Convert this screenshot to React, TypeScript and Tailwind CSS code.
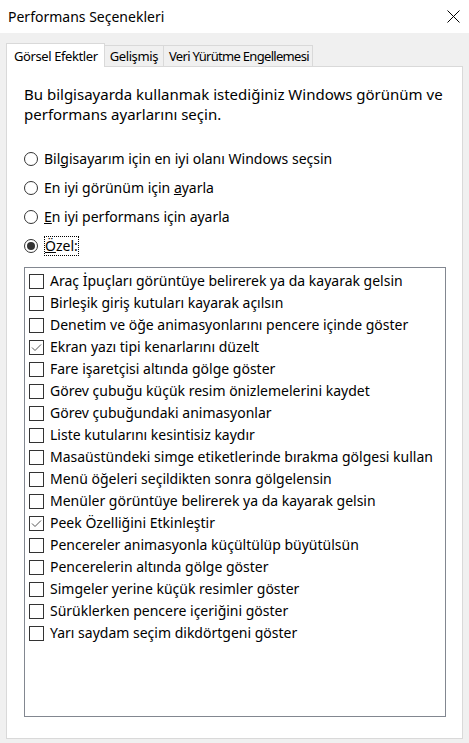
import React, { useState } from 'react';

const options = [
  { label: 'Araç İpuçları görüntüye belirerek ya da kayarak gelsin', checked: false },
  { label: 'Birleşik giriş kutuları kayarak açılsın', checked: false },
  { label: 'Denetim ve öğe animasyonlarını pencere içinde göster', checked: false },
  { label: 'Ekran yazı tipi kenarlarını düzelt', checked: true },
  { label: 'Fare işaretçisi altında gölge göster', checked: false },
  { label: 'Görev çubuğu küçük resim önizlemelerini kaydet', checked: false },
  { label: 'Görev çubuğundaki animasyonlar', checked: false },
  { label: 'Liste kutularını kesintisiz kaydır', checked: false },
  { label: 'Masaüstündeki simge etiketlerinde bırakma gölgesi kullan', checked: false },
  { label: 'Menü öğeleri seçildikten sonra gölgelensin', checked: false },
  { label: 'Menüler görüntüye belirerek ya da kayarak gelsin', checked: false },
  { label: 'Peek Özelliğini Etkinleştir', checked: true },
  { label: 'Pencereler animasyonla küçültülüp büyütülsün', checked: false },
  { label: 'Pencerelerin altında gölge göster', checked: false },
  { label: 'Simgeler yerine küçük resimler göster', checked: false },
  { label: 'Sürüklerken pencere içeriğini göster', checked: false },
  { label: 'Yarı saydam seçim dikdörtgeni göster', checked: false },
];

function Radio({ selected }: { selected?: boolean }) {
  return (
    <span className="w-[14px] h-[14px] rounded-full border border-[#333] bg-white flex items-center justify-center shrink-0">
      {selected && <span className="w-[8px] h-[8px] rounded-full bg-[#333]" />}
    </span>
  );
}

function Check({ checked }: { checked: boolean }) {
  return (
    <span className="w-[15px] h-[15px] border border-[#333] bg-white flex items-center justify-center shrink-0">
      {checked && (
        <svg width="13" height="13" viewBox="0 0 13 13">
          <polyline points="2,6.5 5,9.5 11,3.5" fill="none" stroke="#555" strokeWidth="1" />
        </svg>
      )}
    </span>
  );
}

export default function App() {
  const [items, setItems] = useState(options);
  const [mode, setMode] = useState(3);

  const toggle = (i: number) => {
    setItems(items.map((it, idx) => (idx === i ? { ...it, checked: !it.checked } : it)));
  };

  return (
    <div className="w-[469px] h-[743px] flex flex-col bg-[#f0f0f0] text-black text-[15px] leading-[20px] font-['Noto_Sans',sans-serif] overflow-hidden">
      {/* başlık çubuğu */}
      <div className="h-[33px] bg-white flex items-center justify-between pl-[8px] pr-[9px] shrink-0 text-[14px]">
        <span>Performans Seçenekleri</span>
        <svg width="13" height="13" viewBox="0 0 13 13">
          <path d="M0.5 0.5L12.5 12.5M12.5 0.5L0.5 12.5" stroke="#000" strokeWidth="1" />
        </svg>
      </div>

      <div className="flex-1 flex flex-col px-[6px] pt-[10px]">
        {/* sekmeler */}
        <div className="flex items-end h-[23px] relative z-10 text-[13px] tracking-[-0.4px]">
          <div className="h-[24px] -mb-px bg-white border border-b-0 border-[#d9d9d9] pl-[7px] pr-[6px] flex items-center">
            Görsel Efektler
          </div>
          <div className="h-[21px] border border-b-0 border-l-0 border-[#d9d9d9] pl-[5px] pr-[5px] flex items-center">
            Gelişmiş
          </div>
          <div className="h-[21px] border border-b-0 border-l-0 border-[#d9d9d9] pl-[5px] pr-[3px] flex items-center tracking-[-0.7px]">
            Veri Yürütme Engellemesi
          </div>
        </div>

        {/* sekme paneli */}
        <div className="h-[673px] bg-white border border-[#d9d9d9] pl-[17px] pr-[16px] pt-[17px] flex flex-col">
          <p>Bu bilgisayarda kullanmak istediğiniz Windows görünüm ve performans ayarlarını seçin.</p>

          <div className="mt-[20px] flex flex-col text-[14px]">
            {[
              <span>Bil<u>g</u>isayarım için en iyi olanı Windows seçsin</span>,
              <span>En iyi görünüm için <u>a</u>yarla</span>,
              <span><u>E</u>n iyi performans için ayarla</span>,
              <span className="outline outline-1 outline-dotted outline-black -outline-offset-1 px-[1px]"><u>Ö</u>zel:</span>,
            ].map((label, i) => (
              <label key={i} className="h-[29px] flex items-center gap-[6px] cursor-default" onClick={() => setMode(i)}>
                <Radio selected={mode === i} />
                {label}
              </label>
            ))}
          </div>

          <div className="mt-[7px] h-[450px] border border-[#828790] pt-[2px] pl-[4px] text-[14px]">
            {items.map((it, i) => (
              <div key={i} className="h-[22px] flex items-center gap-[6px] whitespace-nowrap" onClick={() => toggle(i)}>
                <Check checked={it.checked} />
                <span>{it.label}</span>
              </div>
            ))}
          </div>
        </div>
      </div>
    </div>
  );
}
